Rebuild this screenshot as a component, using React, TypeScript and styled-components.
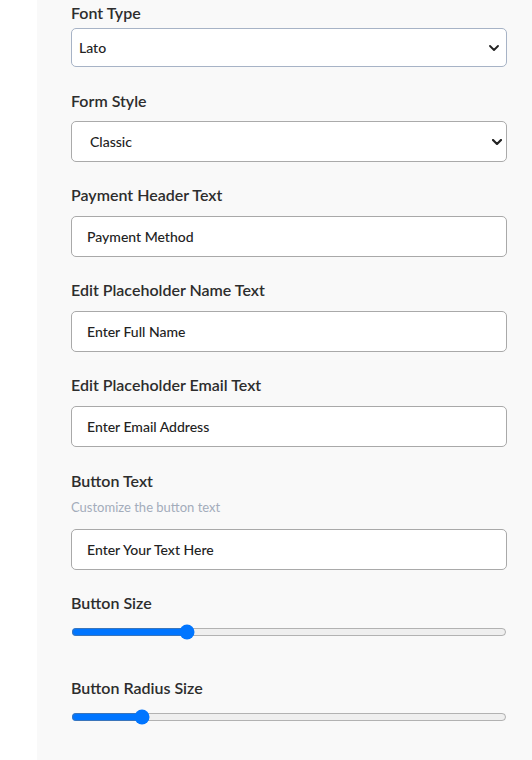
import React, { useState } from "react";
import styled, { createGlobalStyle } from "styled-components";

const Global = createGlobalStyle`
  html, body { margin: 0; padding: 0; background: #ffffff; }
  body { font-family: Lato, "Open Sans", Arial, sans-serif; }
  * { box-sizing: border-box; }
`;

const Page = styled.div`
  display: flex;
  min-height: 760px;
  background: #ffffff;
`;

const Gutter = styled.div`
  width: 37px;
  flex: none;
  background: #ffffff;
`;

const Panel = styled.div`
  flex: 1;
  background: #f9f9f9;
  padding: 3px 25px 0 34px;
  min-height: 760px;
`;

const Group = styled.div<{ $mb?: number }>`
  display: flex;
  flex-direction: column;
  margin-bottom: ${(p) => (p.$mb ?? 23)}px;
`;

const Label = styled.label<{ $mb?: number }>`
  display: block;
  font-family: Lato, Arial, sans-serif;
  font-size: 16px;
  line-height: 20px;
  font-weight: 600;
  color: #2d2d2d;
  margin-bottom: ${(p) => (p.$mb ?? 11)}px;
`;

const Hint = styled.div`
  font-family: Lato, Arial, sans-serif;
  font-size: 13px;
  line-height: 16px;
  color: #a3acbb;
  margin-bottom: 14px;
`;

const SelectWrap = styled.div`
  position: relative;
  width: 100%;
`;

const Select = styled.select<{ $h: number; $pl: number; $border: string }>`
  appearance: none;
  -webkit-appearance: none;
  display: block;
  width: 100%;
  height: ${(p) => p.$h}px;
  padding: 0 24px 0 ${(p) => p.$pl}px;
  font-family: Lato, Arial, sans-serif;
  font-size: 14px;
  font-weight: 500;
  color: #222;
  background-color: #ffffff;
  border: 1px solid ${(p) => p.$border};
  border-radius: 5px;
  outline: none;
`;

const Chevron = styled.svg<{ $right: number }>`
  position: absolute;
  top: 50%;
  right: ${(p) => p.$right}px;
  transform: translateY(-50%);
  pointer-events: none;
`;

const TextInput = styled.input`
  width: 100%;
  height: 41px;
  padding: 0 15px;
  font-family: Lato, Arial, sans-serif;
  font-size: 14px;
  font-weight: 500;
  color: #222;
  background: #ffffff;
  border: 1px solid #a9a9a9;
  border-radius: 5px;
  outline: none;
`;

const Range = styled.input`
  width: 100%;
  height: 16px;
  margin: 0;
  display: block;
`;

function Arrow({ right, w, sw }: { right: number; w: number; sw: number }) {
  return (
    <Chevron $right={right} width={w} height={6} viewBox="0 0 10 6">
      <path d="M1 1 L5 5 L9 1" fill="none" stroke="#222" strokeWidth={sw} strokeLinecap="round" strokeLinejoin="round" />
    </Chevron>
  );
}

export default function App() {
  const [font, setFont] = useState("Lato");
  const [style, setStyle] = useState("Classic");
  const [header, setHeader] = useState("Payment Method");
  const [name, setName] = useState("Enter Full Name");
  const [email, setEmail] = useState("Enter Email Address");
  const [btn, setBtn] = useState("Enter Your Text Here");
  const [size, setSize] = useState(257);
  const [radius, setRadius] = useState(150);

  return (
    <Page>
      <Global />
      <Gutter />
      <Panel>
        <Group $mb={24}>
          <Label $mb={5}>Font Type</Label>
          <SelectWrap>
            <Select $h={39} $pl={7} $border="#a7b3c6" value={font} onChange={(e) => setFont(e.target.value)}>
              <option>Lato</option>
              <option>Roboto</option>
              <option>Open Sans</option>
            </Select>
            <Arrow right={8} w={10} sw={1.8} />
          </SelectWrap>
        </Group>
        <Group $mb={23}>
          <Label $mb={10}>Form Style</Label>
          <SelectWrap>
            <Select $h={41} $pl={18} $border="#aaaaaa" value={style} onChange={(e) => setStyle(e.target.value)}>
              <option>Classic</option>
              <option>Modern</option>
            </Select>
            <Arrow right={5} w={10} sw={2.2} />
          </SelectWrap>
        </Group>
        <Group>
          <Label>Payment Header Text</Label>
          <TextInput value={header} onChange={(e) => setHeader(e.target.value)} />
        </Group>
        <Group>
          <Label>Edit Placeholder Name Text</Label>
          <TextInput value={name} onChange={(e) => setName(e.target.value)} />
        </Group>
        <Group $mb={24}>
          <Label>Edit Placeholder Email Text</Label>
          <TextInput value={email} onChange={(e) => setEmail(e.target.value)} />
        </Group>
        <Group>
          <Label $mb={8}>Button Text</Label>
          <Hint>Customize the button text</Hint>
          <TextInput value={btn} onChange={(e) => setBtn(e.target.value)} />
        </Group>
        <Group $mb={38}>
          <Label>Button Size</Label>
          <Range type="range" min={0} max={1000} value={size} onChange={(e) => setSize(Number(e.target.value))} />
        </Group>
        <Group>
          <Label>Button Radius Size</Label>
          <Range type="range" min={0} max={1000} value={radius} onChange={(e) => setRadius(Number(e.target.value))} />
        </Group>
      </Panel>
    </Page>
  );
}
